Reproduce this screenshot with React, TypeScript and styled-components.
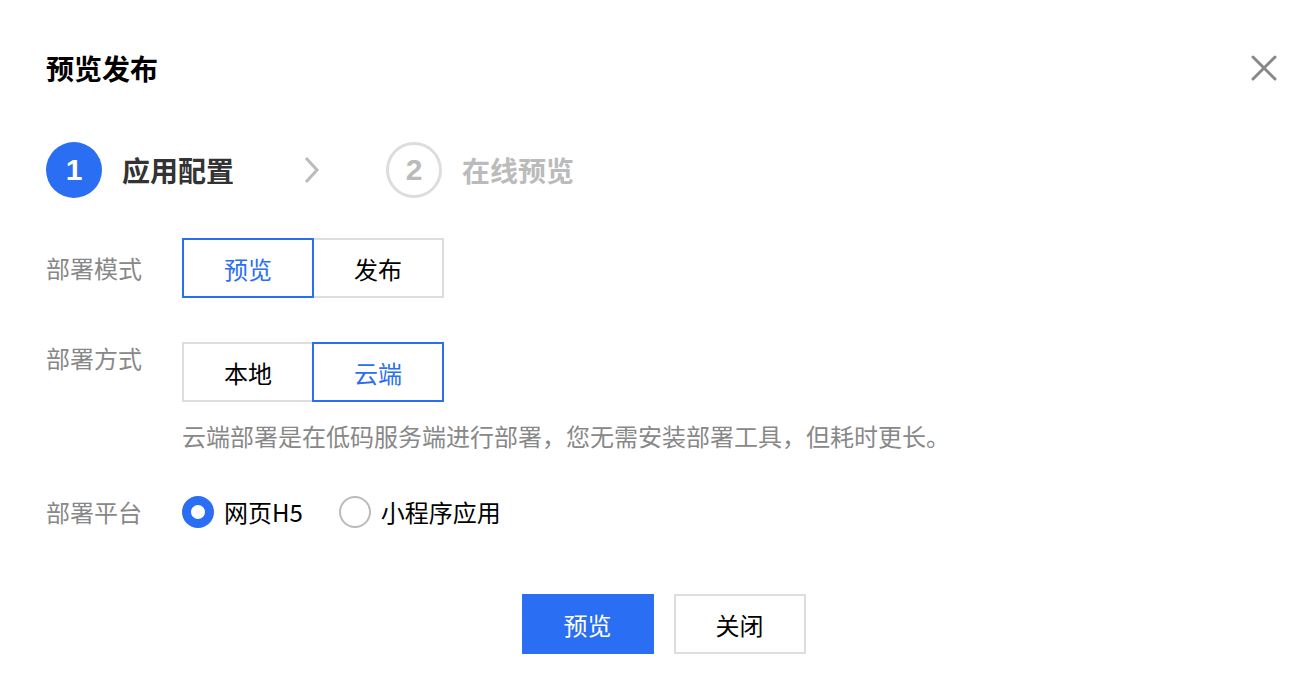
import styled, { createGlobalStyle } from 'styled-components';

const BLUE = '#2a6ef3';

const GlobalStyle = createGlobalStyle`
  html, body {
    margin: 0;
    padding: 0;
    background: #fff;
  }

  body {
    font-family: "Noto Sans CJK SC", "Noto Sans", "Liberation Sans", sans-serif;
    color: #000;
  }
`;

const Dialog = styled.div`
  width: 1316px;
  height: 688px;
  box-sizing: border-box;
  padding: 47px 37px 0 46px;
  display: flex;
  flex-direction: column;
`;

const Header = styled.div`
  display: flex;
  align-items: center;
  justify-content: space-between;
  height: 42px;
`;

const Title = styled.h1`
  margin: 0;
  font-size: 28px;
  font-weight: 700;
  line-height: 42px;
  color: #000;
`;

const CloseButton = styled.button`
  border: 0;
  background: none;
  padding: 0;
  width: 30px;
  height: 30px;
  display: flex;
  align-items: center;
  justify-content: center;
  cursor: pointer;
`;

const Steps = styled.div`
  display: flex;
  align-items: center;
  margin-top: 53px;
  height: 56px;
`;

const Step = styled.div`
  display: flex;
  align-items: center;
  gap: 20px;
`;

const StepCircle = styled.div<{ $active?: boolean }>`
  width: 56px;
  height: 56px;
  box-sizing: border-box;
  border-radius: 50%;
  display: flex;
  align-items: center;
  justify-content: center;
  font-family: "Liberation Sans", Arial, sans-serif;
  font-size: 30px;
  font-weight: 700;
  background: ${(p) => (p.$active ? BLUE : '#fff')};
  color: ${(p) => (p.$active ? '#fff' : '#bbb')};
  border: ${(p) => (p.$active ? 'none' : '3px solid #ddd')};
`;

const StepLabel = styled.span<{ $active?: boolean }>`
  font-size: 28px;
  font-weight: 700;
  color: ${(p) => (p.$active ? '#333' : '#bbb')};
`;

const StepArrow = styled.div`
  width: 20px;
  height: 30px;
  margin: 0 63px 0 69px;
  display: flex;
  align-items: center;
`;

const Form = styled.div`
  display: flex;
  flex-direction: column;
  margin-top: 40px;
`;

const FormRow = styled.div<{ $align?: string; $mt?: number }>`
  display: flex;
  align-items: ${(p) => p.$align || 'center'};
  margin-top: ${(p) => p.$mt || 0}px;
`;

const Label = styled.div`
  width: 136px;
  flex: 0 0 136px;
  font-size: 24px;
  color: #888;
  line-height: 32px;
`;

const Control = styled.div`
  display: flex;
  flex-direction: column;
`;

const Segmented = styled.div`
  display: flex;
`;

const SegmentButton = styled.button<{ $active?: boolean }>`
  position: relative;
  width: 132px;
  height: 60px;
  box-sizing: border-box;
  background: #fff;
  font-family: inherit;
  font-size: 24px;
  cursor: pointer;
  border: 2px solid ${(p) => (p.$active ? BLUE : '#ddd')};
  color: ${(p) => (p.$active ? BLUE : '#000')};
  z-index: ${(p) => (p.$active ? 1 : 0)};

  & + & {
    margin-left: -2px;
  }
`;

const Help = styled.p`
  margin: 18px 0 0;
  font-size: 24px;
  line-height: 32px;
  color: #888;
`;

const RadioGroup = styled.div`
  display: flex;
  align-items: center;
  gap: 36px;
`;

const RadioOption = styled.label`
  display: flex;
  align-items: center;
  gap: 10px;
  font-size: 24px;
  color: #000;
  cursor: pointer;
`;

const RadioDot = styled.span<{ $checked?: boolean }>`
  width: 32px;
  height: 32px;
  box-sizing: border-box;
  border-radius: 50%;
  background: #fff;
  border: ${(p) => (p.$checked ? `9px solid ${BLUE}` : '2px solid #bbb')};
`;

const Footer = styled.div`
  display: flex;
  justify-content: center;
  gap: 20px;
  margin-top: 65px;
  padding-left: 2px;
`;

const FooterButton = styled.button<{ $primary?: boolean }>`
  width: 132px;
  height: 60px;
  box-sizing: border-box;
  font-family: inherit;
  font-size: 24px;
  cursor: pointer;
  background: ${(p) => (p.$primary ? BLUE : '#fff')};
  color: ${(p) => (p.$primary ? '#fff' : '#000')};
  border: 2px solid ${(p) => (p.$primary ? BLUE : '#ddd')};
`;

const App = () => {
  return (
    <>
      <GlobalStyle />
      <Dialog>
        <Header>
          <Title>预览发布</Title>
          <CloseButton aria-label="关闭">
            <svg width="26" height="26" viewBox="0 0 26 26">
              <path
                d="M2 2 L24 24 M24 2 L2 24"
                stroke="#888"
                strokeWidth="3"
                strokeLinecap="round"
              />
            </svg>
          </CloseButton>
        </Header>

        <Steps>
          <Step>
            <StepCircle $active>1</StepCircle>
            <StepLabel $active>应用配置</StepLabel>
          </Step>
          <StepArrow>
            <svg width="18" height="28" viewBox="0 0 18 28">
              <path
                d="M3 2 L14 14 L3 26"
                stroke="#bbb"
                strokeWidth="3"
                fill="none"
              />
            </svg>
          </StepArrow>
          <Step>
            <StepCircle>2</StepCircle>
            <StepLabel>在线预览</StepLabel>
          </Step>
        </Steps>

        <Form>
          <FormRow>
            <Label>部署模式</Label>
            <Segmented>
              <SegmentButton $active>预览</SegmentButton>
              <SegmentButton>发布</SegmentButton>
            </Segmented>
          </FormRow>

          <FormRow $align="flex-start" $mt={44}>
            <Label>部署方式</Label>
            <Control>
              <Segmented>
                <SegmentButton>本地</SegmentButton>
                <SegmentButton $active>云端</SegmentButton>
              </Segmented>
              <Help>
                云端部署是在低码服务端进行部署，您无需安装部署工具，但耗时更长。
              </Help>
            </Control>
          </FormRow>

          <FormRow $mt={42}>
            <Label>部署平台</Label>
            <RadioGroup>
              <RadioOption>
                <RadioDot $checked />
                网页H5
              </RadioOption>
              <RadioOption>
                <RadioDot />
                小程序应用
              </RadioOption>
            </RadioGroup>
          </FormRow>
        </Form>

        <Footer>
          <FooterButton $primary>预览</FooterButton>
          <FooterButton>关闭</FooterButton>
        </Footer>
      </Dialog>
    </>
  );
};

export default App;
